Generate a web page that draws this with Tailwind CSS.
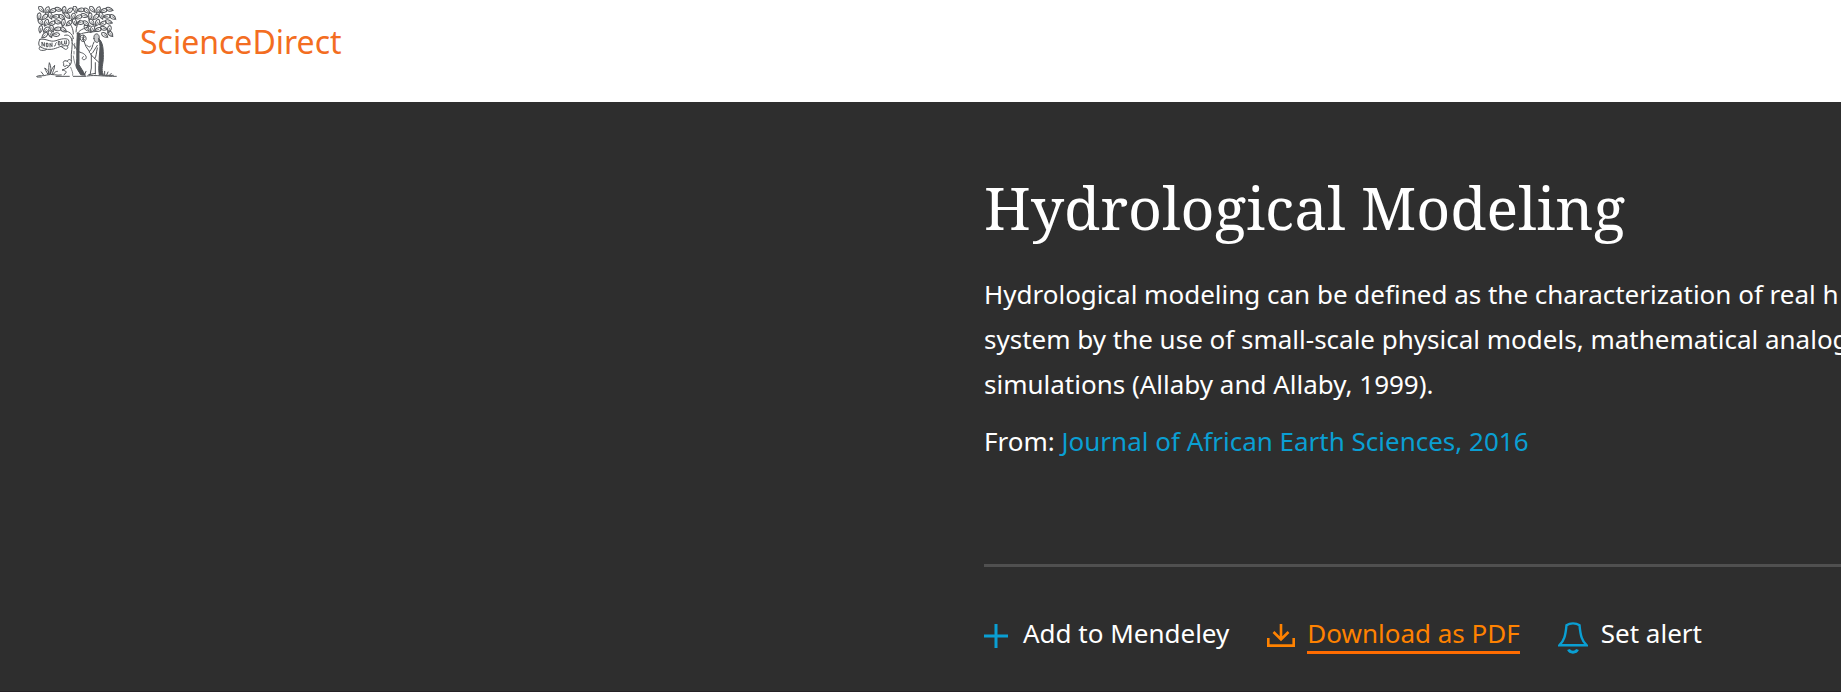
<!DOCTYPE html>
<html lang="en">
<head>
  <meta charset="UTF-8">
  <meta name="viewport" content="width=device-width, initial-scale=1.0">
  <title>Hydrological Modeling | ScienceDirect Topics</title>
  <script src="https://cdn.jsdelivr.net/npm/@tailwindcss/browser@4"></script>
</head>
<body class="bg-white font-['Noto_Sans','Open_Sans',sans-serif] overflow-x-hidden">

  <!-- Header -->
  <header class="flex items-start px-9 pt-1.5 pb-6">
    <a href="#" class="flex items-center gap-[23px] text-[#f36d21]">
      <!-- Tree logo -->
      <svg class="w-[81px] h-[72px] shrink-0 text-[#53565a]" viewBox="0 0 243 216" fill="none" stroke="currentColor" stroke-width="3" stroke-linecap="round" stroke-linejoin="round" role="img" aria-label="Elsevier">
        <defs>
          <g id="leaf">
            <path d="M0-11C8-8 7 5 0 11C-7 5-8-8 0-11Z" />
            <path d="M0-2V12" stroke-width="2" />
          </g>
        </defs>
        <g id="leaves"></g>
        <!-- Branches and trunk -->
        <path d="M112 98C110 82 98 76 84 74M112 84C112 66 104 56 98 48M120 78C120 62 126 52 132 42M124 82C134 68 150 66 164 60M126 88C140 78 158 80 182 76M86 88C98 84 106 92 108 104" />
        <path d="M108 98C111 122 104 142 106 160C108 176 98 186 78 192C90 194 96 198 84 206" />
        <path d="M124 82L132 82C128 116 129 152 129 176L148 208L134 206L121 184C124 150 121 114 124 82Z" fill="currentColor" />
        <path d="M112 150C114 170 122 192 138 208M104 184C108 194 112 202 110 208M116 112V128M114 136V144" stroke-width="2" />
        <!-- Vine -->
        <path d="M108 112C122 122 120 136 136 140C150 144 156 158 145 161C137 162 137 153 142 152M106 164C100 158 96 160 94 166M94 166C86 160 78 168 84 174C78 180 88 184 92 178C100 184 106 174 99 170" />
        <!-- Banner -->
        <path d="M12 100C30 96 42 110 60 104C76 98 90 96 97 101C101 108 99 116 95 120C76 116 64 128 46 130C30 132 20 126 12 122C6 116 8 106 12 100ZM12 122C8 126 8 132 16 133C24 134 30 132 32 130M94 120C98 126 94 130 88 130L76 122" />
        <path d="M18 109V120M18 109L25 121V110M31 112V122H36V112H31M42 123V112L48 122V111M55 120C64 118 54 114 61 110M67 108V117H72V107H67M77 106V115H82M86 105V114H91V104" stroke-width="3" />
        <!-- Figure -->
        <path d="M174 98C172 88 178 82 184 84C192 88 190 98 188 106C184 112 176 110 174 98Z" fill="currentColor" fill-opacity=".3" />
        <path d="M188 98C202 108 202 132 202 154C202 174 194 188 202 206L190 207C186 188 190 170 190 150C192 128 194 114 188 98Z" fill="currentColor" />
        <path d="M174 108C168 118 170 130 160 136L150 122L144 106M160 136C158 142 166 146 170 140L184 118M164 146C174 152 180 164 192 172M166 146V186L162 207M184 126C180 140 182 152 176 158M178 170V204M158 206L178 202M152 118C158 122 162 126 164 120" />
        <path d="M134 90C140 84 150 88 150 96C152 104 144 108 138 106C132 102 132 96 134 90ZM138 94L146 102M146 92L138 102M142 88V106" />
        <!-- Ground and grass -->
        <path d="M2 211C10 206 22 212 32 207C48 202 62 210 76 207M60 211H100M112 211H150M154 210C180 206 206 212 241 211M200 208H232M4 213H16" />
        <path d="M36 205C30 196 28 190 26 186C34 190 38 196 39 204C38 188 38 180 40 170C46 180 45 194 43 204C46 192 50 184 56 178C56 188 50 198 48 205M52 205C56 198 60 196 64 196M22 206L16 198M140 203V194M146 205L150 196M212 207L216 198M220 208L226 202M206 206V196" />
      </svg>
      <span class="text-[32px] leading-[72px]">ScienceDirect</span>
    </a>
  </header>

  <!-- Topic banner -->
  <main class="bg-[#2e2e2e] text-white border-b border-[#252025] grid grid-cols-[31fr_27fr] pt-[65px] pb-[35px]">
    <div class="col-start-2 min-w-0 overflow-hidden whitespace-nowrap text-[26px] leading-[45px]">
      <h1 class="font-['Noto_Serif',serif] text-[59px] leading-[80px]">Hydrological Modeling</h1>

      <p class="mt-[25px]">
        Hydrological modeling can be defined as the characterization of real h<br>
        system by the use of small-scale physical models, mathematical analog<br>
        simulations (Allaby and Allaby, 1999).
      </p>
      <p class="mt-3">From: <a href="#" class="text-[#0a9fd3]">Journal of African Earth Sciences, 2016</a></p>

      <hr class="mt-[100px] border-t-3 border-[#505050]">

      <!-- Actions -->
      <div class="mt-11 flex items-start gap-[38px]">
        <button type="button" class="flex items-start gap-[15px]">
          <svg class="w-6 h-6 mt-[13px] text-[#0a9fd3]" viewBox="0 0 24 24" fill="none" stroke="currentColor" stroke-width="3">
            <path d="M12 0V24M0 12H24" />
          </svg>
          Add to Mendeley
        </button>
        <a href="#" class="flex items-start gap-3 text-[#ff8200]">
          <svg class="w-7 h-6 mt-[13px]" viewBox="0 0 28 24" fill="none" stroke="currentColor" stroke-width="2.6">
            <path d="M1.300 14V21.600H26.700V14M14 0V15M6.500 8L14 15.500L21.500 8" />
          </svg>
          <span class="h-[43px] border-b-3 border-[#ff6c00]">Download as PDF</span>
        </a>
        <button type="button" class="flex items-start gap-[13px]">
          <svg class="w-[30px] h-8 mt-[11px] text-[#0a9fd3]" viewBox="0 0 30 32" fill="none" stroke="currentColor" stroke-width="2.4">
            <path d="M8.500 3.200C12 .8 18 .8 21.500 3.200C22.500 14 24 19 28.500 23.200H1.500C6 19 7.500 14 8.500 3.200Z" />
            <path d="M10.500 27.500C12 31 18 31 19.500 27.500" stroke-width="3" />
          </svg>
          Set alert
        </button>
      </div>
    </div>
  </main>

  <script>
    // leaves of the tree, row by row: [y, first x, last x]
    const rows = [[12, 16, 230], [31, 9, 236], [50, 14, 234], [69, 14, 92], [69, 152, 234], [86, 26, 62], [85, 206, 224]];
    const turns = [-40, 25, 70, -75, 10, 50, -20, 85, -55];
    let leaves = '', n = 0;
    rows.forEach(([y, from, to]) => {
      for (let x = from; x <= to; x += 17) {
        leaves += `<use href="#leaf" transform="translate(${x} ${y + (n % 3) * 2 - 2}) rotate(${turns[n % turns.length]})" />`;
        n++;
      }
    });
    document.getElementById('leaves').innerHTML = leaves;
  </script>
</body>
</html>
